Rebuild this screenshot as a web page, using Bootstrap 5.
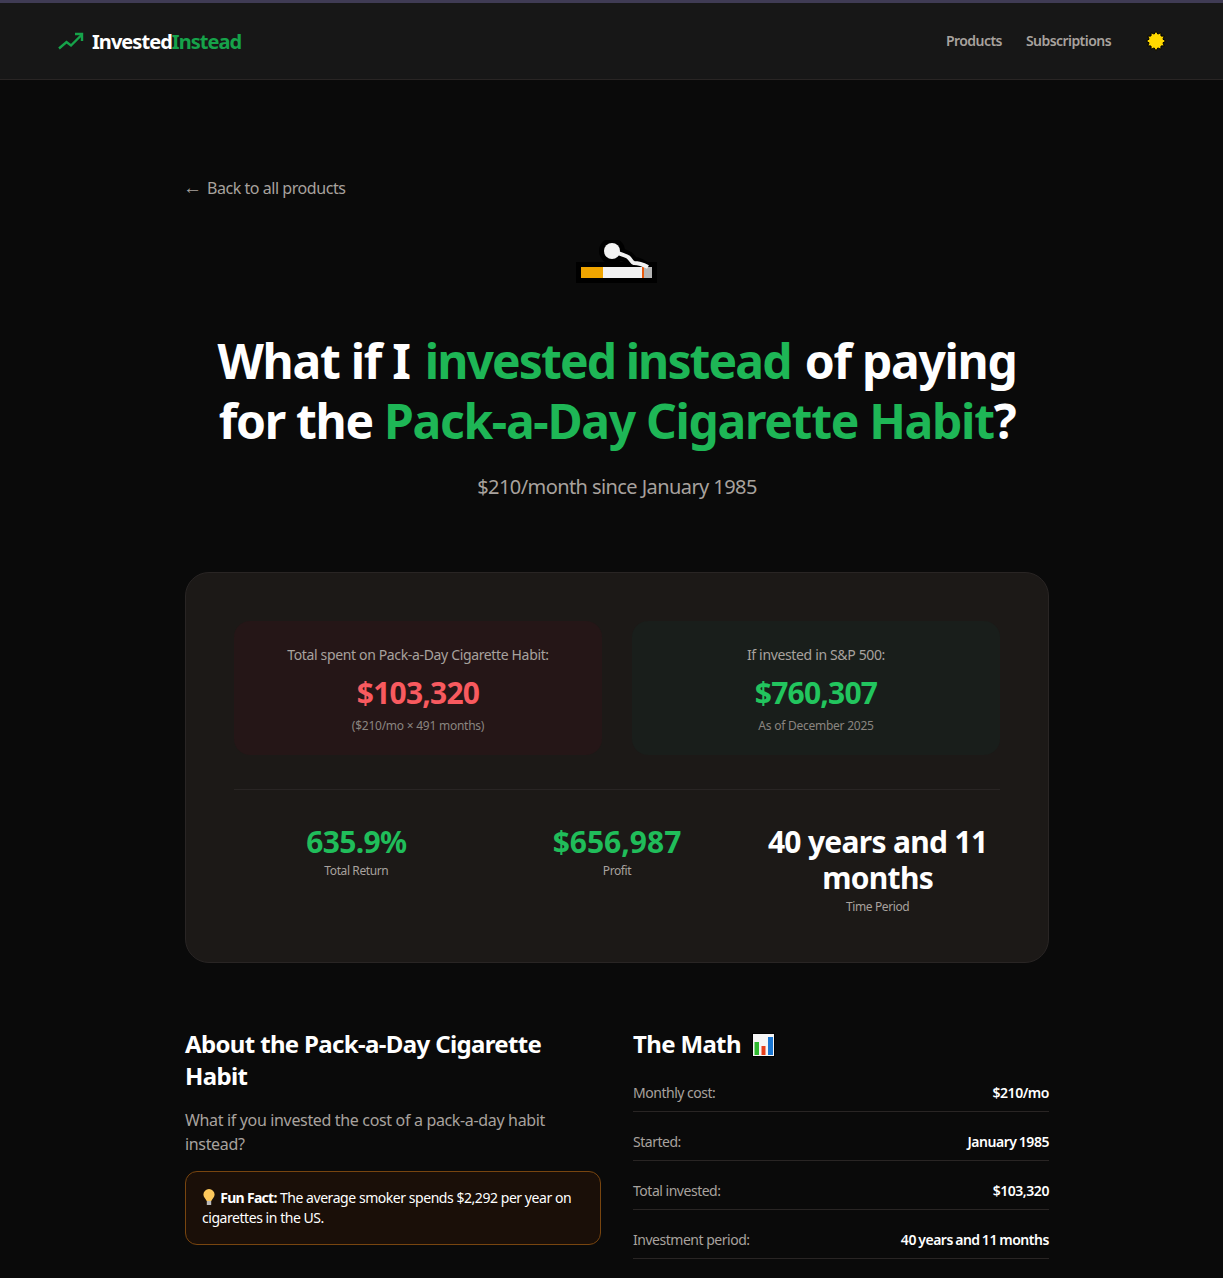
<!DOCTYPE html>
<html lang="en"><head><meta charset="utf-8"><title>InvestedInstead</title>
<link href="https://cdn.jsdelivr.net/npm/bootstrap@5.3.0/dist/css/bootstrap.min.css" rel="stylesheet">
<style>
html,body{background:#0a0a0a;}
body{font-family:"Noto Sans","Open Sans",sans-serif;color:#fff;border-top:3px solid #3f3b54;overflow-x:hidden;}
.topbar{background:#171717;border-bottom:1px solid #292524;height:77px;padding:0 57px 0 58px;}
.logo-txt{font-size:20px;font-weight:700;letter-spacing:-.95px;color:#fff;text-decoration:none;line-height:28px;}
.logo-word{padding-top:1px;}
.grn{color:#16a34a;}
.grnb{color:#1eb656;}
.grnc{color:#22c55e;}
.grnd{color:#20bd5a;}
.tlink{font-size:14px;font-weight:600;color:#a8a29e;text-decoration:none;letter-spacing:-.55px;margin-top:-2px;}
.sunmark{margin-left:35px;}
.wrap{width:864px;margin:0 0 0 185px;}
.back{font-size:16px;color:#a8a29e;text-decoration:none;letter-spacing:-.45px;line-height:24px;margin-top:96px;}
.arrow{font-family:"Liberation Sans",sans-serif;font-size:19px;margin:0 5px 0 -2px;letter-spacing:0;}
.hero-h{font-size:48px;line-height:60px;font-weight:700;letter-spacing:-1.3px;margin:47px 0 0;}
.hero-first{letter-spacing:-1.9px;margin:0 3px 0 4px;}
.hero-sub{font-size:20px;line-height:28px;color:#a8a29e;letter-spacing:-.58px;margin-top:22px;}
.panel{background:#1c1917;border:1px solid #292524;border-radius:24px;padding:48px;margin-top:71px;height:391px;}
.boxr,.boxg{flex:1 1 0;border-radius:16px;padding:24px;height:134px;text-align:center;}
.boxr{background:#251617;}.boxg{background:#191e1b;}
.blabel{font-size:14px;line-height:20px;color:#a8a29e;letter-spacing:-.35px;}
.bval{font-size:30px;line-height:36px;font-weight:700;letter-spacing:-.8px;margin-top:10px;}
.bnote{font-size:12px;line-height:16px;color:#8a8580;letter-spacing:-.25px;margin-top:7px;}
.red{color:#f85a5f;}
.rule{border-top:1px solid #292524;margin-top:34px;}
.statrow{margin-top:34px;}
.sval{font-size:30px;line-height:36px;font-weight:700;letter-spacing:-.7px;}
.sval-open{letter-spacing:0;}
.slabel{font-size:12px;line-height:16px;color:#a8a29e;letter-spacing:-.4px;margin-top:3px;}
.lower{margin-top:65px;gap:32px;}
.lower>div{flex:1 1 0;}
.sec-h{font-size:24px;line-height:32px;font-weight:700;letter-spacing:-.65px;margin:0;}
.sec-p{font-size:16px;line-height:24px;color:#a8a29e;letter-spacing:-.34px;margin:16px 0 0;}
.fact{background:#1a0f08;border:1px solid #78450f;border-radius:12px;padding:16px;font-size:14px;line-height:20px;margin-top:15px;letter-spacing:-.45px;}
.fact strong{letter-spacing:-.7px;}
.mlist{margin-top:3px;}
.mrow{height:49px;border-bottom:1px solid #292524;font-size:14px;padding-bottom:8px;}
.mlabel{color:#a8a29e;letter-spacing:-.48px;}.mval{font-weight:600;color:#fff;letter-spacing:-.45px;word-spacing:-1px;}
</style></head><body>
<nav class="topbar d-flex align-items-center justify-content-between">
  <a class="logo-txt d-flex align-items-center" href="#">
    <svg width="26" height="18" viewBox="0 0 26 18" class="me-2" fill="none" stroke="#16a34a" stroke-width="2.4"><path d="M1 16.5 8.5 10l4.5 3.500L23.500 3"/><path d="M17 2h7v7"/></svg>
    <span class="logo-word">Invested<span class="grn">Instead</span></span>
  </a>
  <div class="d-flex align-items-center">
    <a class="tlink me-4" href="#">Products</a>
    <a class="tlink" href="#">Subscriptions</a>
    <svg class="sunmark" width="20" height="20" viewBox="0 0 20 20"><polygon fill="#ffd800" stroke="#000" stroke-width="1" points="19.800,10 16.900,11.850 18.310,14.800 15,15 14.800,18.310 11.850,16.900 10,19.800 8.150,16.900 5.200,18.310 5,15 1.690,14.800 3.100,11.850 .2,10 3.100,8.150 1.690,5.200 5,5 5.200,1.690 8.150,3.100 10,.2 11.850,3.100 14.800,1.690 15,5 18.310,5.200 16.900,8.150"/></svg>
  </div>
</nav>
<main class="wrap">
  <div class="back"><a class="back" href="#"><span class="arrow">←</span>Back to all products</a></div>
  <div class="text-center" style="margin-top:40px">
    <svg width="82" height="44" viewBox="0 0 82 44" class="d-block mx-auto"><g fill="none" stroke="#000" stroke-width="12" stroke-linecap="round"><path d="M36 11C44 14 48 15 52 17 55 19 55 22 58 23 64 23 68 26 73 31"/></g><circle cx="36" cy="11" r="13" fill="#000"/><rect x="0" y="22" width="81" height="21" fill="#000"/><rect x="5" y="27" width="22" height="11" fill="#f0a500"/><rect x="27" y="27" width="39" height="11" fill="#f2f2f2"/><rect x="66" y="27" width="2" height="11" fill="#e8590c"/><rect x="68" y="27" width="8" height="11" fill="#b4b4b4"/><path d="M36 11C44 14 48 15 52 17 55 19 55 22 58 23 64 23 68 25 72 27" stroke="#f2f2f2" stroke-width="4" fill="none"/><circle cx="36" cy="11" r="8" fill="#f2f2f2"/></svg>
    <h1 class="hero-h">What if I <span class="grnb hero-first d-inline-block">invested instead</span> of paying<br>for the <span class="grnb">Pack-a-Day Cigarette Habit</span>?</h1>
    <p class="hero-sub mb-0">$210/month since January 1985</p>
  </div>
  <section class="panel">
    <div class="d-flex" style="gap:30px">
      <div class="boxr"><div class="blabel">Total spent on Pack-a-Day Cigarette Habit:</div><div class="bval red">$103,320</div><div class="bnote">($210/mo × 491 months)</div></div>
      <div class="boxg"><div class="blabel">If invested in S&amp;P 500:</div><div class="bval grnc">$760,307</div><div class="bnote">As of December 2025</div></div>
    </div>
    <div class="rule"></div>
    <div class="statrow row gx-3 text-center">
      <div class="col-4"><div class="sval grnd">635.9%</div><div class="slabel">Total Return</div></div>
      <div class="col-4"><div class="sval sval-open grnd">$656,987</div><div class="slabel">Profit</div></div>
      <div class="col-4"><div class="sval">40 years and 11 months</div><div class="slabel">Time Period</div></div>
    </div>
  </section>
  <section class="lower d-flex">
    <div>
      <h2 class="sec-h">About the Pack-a-Day Cigarette Habit</h2>
      <p class="sec-p">What if you invested the cost of a pack-a-day habit instead?</p>
      <div class="fact"><svg width="14" height="17" viewBox="0 0 14 17" style="vertical-align:-3px;margin-right:1px"><path d="M7 0a5.600 5.600 0 0 0-5.600 5.600c0 2.500 2 4.200 3.300 6.400h4.600c1.300-2.200 3.300-3.900 3.300-6.400A5.600 5.600 0 0 0 7 0z" fill="#fdc85c"/><rect x="4.800" y="12" width="4.400" height="4" fill="#b9b9b9"/></svg> <strong>Fun Fact:</strong> The average smoker spends $2,292 per year on cigarettes in the US.</div>
    </div>
    <div>
      <h2 class="sec-h">The Math <svg width="23" height="24" viewBox="0 0 23 24" style="vertical-align:-4px;margin-left:6px"><rect x=".5" y=".5" width="22" height="23" fill="#f6f6f6" stroke="#000"/><rect x="2.500" y="9" width="4.500" height="13" fill="#2eb82e"/><rect x="9.500" y="13" width="4" height="9" fill="#e8401c"/><rect x="16" y="4" width="5" height="18" fill="#1976d2"/></svg></h2>
      <div class="mlist">
        <div class="mrow d-flex justify-content-between align-items-end"><span class="mlabel">Monthly cost:</span><span class="mval">$210/mo</span></div>
        <div class="mrow d-flex justify-content-between align-items-end"><span class="mlabel">Started:</span><span class="mval">January 1985</span></div>
        <div class="mrow d-flex justify-content-between align-items-end"><span class="mlabel">Total invested:</span><span class="mval">$103,320</span></div>
        <div class="mrow d-flex justify-content-between align-items-end"><span class="mlabel">Investment period:</span><span class="mval">40 years and 11 months</span></div>
      </div>
    </div>
  </section>
</main>
<script src="https://cdn.jsdelivr.net/npm/bootstrap@5.3.0/dist/js/bootstrap.bundle.min.js"></script>
</body></html>
